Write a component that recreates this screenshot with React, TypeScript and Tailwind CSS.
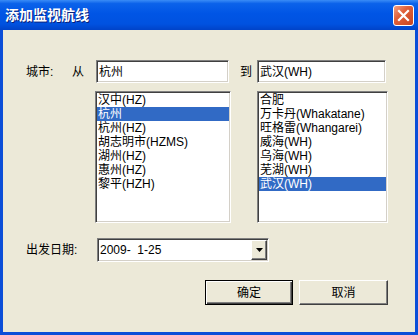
import React from 'react';

const sunken =
  'border border-t-[#808080] border-l-[#808080] border-r-white border-b-white shadow-[inset_1px_1px_0_#404040,inset_-1px_-1px_0_#d4d0c8] bg-white';

function ListBox({ items, selected, className }: { items: string[]; selected: number; className: string }) {
  return (
    <div className={`${sunken} ${className} h-[132px] px-[1px] pt-[1px] overflow-hidden`}>
      {items.map((t, i) => (
        <div
          key={i}
          className={`h-[14px] leading-[14px] pl-[1px] whitespace-nowrap ${
            i === selected ? 'bg-[#316ac5] text-white' : 'text-black'
          }`}
        >
          {t}
        </div>
      ))}
    </div>
  );
}

export default function App() {
  const left = ['汉中(HZ)', '杭州', '杭州(HZ)', '胡志明市(HZMS)', '湖州(HZ)', '惠州(HZ)', '黎平(HZH)'];
  const right = ['合肥', '万卡丹(Whakatane)', '旺格雷(Whangarei)', '威海(WH)', '乌海(WH)', '芜湖(WH)', '武汉(WH)'];
  return (
    <div className="w-[418px] h-[335px] flex flex-col font-['Liberation_Sans','Noto_Sans_CJK_SC',sans-serif] text-[12px] text-black">
      <div className="h-[30px] shrink-0 flex items-center justify-between pl-[5px] pr-[4px] bg-[linear-gradient(to_bottom,#3a8cf6_0%,#0b62ea_12%,#0055e5_45%,#0052e0_80%,#0043c8_100%)]">
        <span className="text-white font-bold text-[14px] leading-none [text-shadow:1px_1px_0_#0a1f7a]">
          添加监视航线
        </span>
        <div className="w-[21px] h-[21px] rounded-[3px] border border-white bg-[linear-gradient(135deg,#f2a083_0%,#e0603a_40%,#c8441f_100%)] flex items-center justify-center">
          <svg width="13" height="13" viewBox="0 0 13 13">
            <path d="M2 2 L11 11 M11 2 L2 11" stroke="white" strokeWidth="2.2" strokeLinecap="square" />
          </svg>
        </div>
      </div>
      <div className="flex-1 flex flex-col border-x-[3px] border-b-[3px] border-[#0b4ed8] bg-[#ece9d8]">
        <div className="mt-[30px] h-[23px] flex items-center">
          <span className="ml-[23px] w-[46px]">城市:</span>
          <span className="w-[24px]">从</span>
          <div className={`${sunken} w-[133px] h-[23px] pl-[2px] flex items-center`}>杭州</div>
          <span className="w-[28px] pl-[11px]">到</span>
          <div className={`${sunken} w-[129px] h-[23px] pl-[2px] flex items-center`}>武汉(WH)</div>
        </div>
        <div className="mt-[8px] flex">
          <ListBox items={left} selected={1} className="ml-[92px] w-[136px]" />
          <ListBox items={right} selected={6} className="ml-[26px] w-[131px]" />
        </div>
        <div className="mt-[15px] h-[24px] flex items-center">
          <span className="ml-[23px] w-[71px]">出发日期:</span>
          <div className={`${sunken} w-[172px] h-[24px] flex items-center pl-[2px] pr-[1px]`}>
            <span className="flex-1 whitespace-pre">2009-  1-25</span>
            <div className="w-[16px] h-[20px] bg-[#ece9d8] border border-t-white border-l-white border-r-[#404040] border-b-[#404040] shadow-[inset_-1px_-1px_0_#808080] flex items-center justify-center">
              <svg width="7" height="4" viewBox="0 0 7 4">
                <path d="M0 0 H7 L3.5 4 Z" fill="black" />
              </svg>
            </div>
          </div>
        </div>
        <div className="mt-[18px] flex">
          <button className="ml-[202px] w-[88px] h-[25px] bg-[#ece9d8] border border-black shadow-[inset_1px_1px_0_#ffffff,inset_-1px_-1px_0_#404040,inset_-2px_-2px_0_#808080] text-[12px]">
            确定
          </button>
          <button className="ml-[6px] w-[89px] h-[25px] bg-[#ece9d8] border border-t-white border-l-white border-r-[#404040] border-b-[#404040] shadow-[inset_-1px_-1px_0_#808080] text-[12px]">
            取消
          </button>
        </div>
      </div>
    </div>
  );
}
